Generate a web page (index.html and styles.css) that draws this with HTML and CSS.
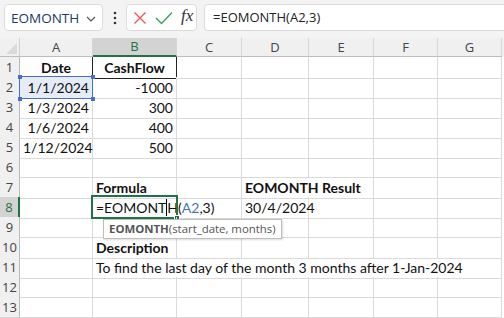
FILE: index.html
```html
<!DOCTYPE html>
<html lang="en">
<head>
  <meta charset="UTF-8">
  <title>EOMONTH</title>
  <link rel="stylesheet" href="styles.css">
</head>
<body>
  <div class="toolbar">
    <div class="namebox">
      <span>EOMONTH</span>
      <svg class="chev" width="10" height="6" viewBox="0 0 10 6"><path d="M1 1 L5 5 L9 1" fill="none" stroke="#555" stroke-width="1.2"/></svg>
    </div>
    <svg class="dots" width="4" height="14" viewBox="0 0 4 14"><circle cx="2" cy="2" r="1.3" fill="#333"/><circle cx="2" cy="7" r="1.3" fill="#333"/><circle cx="2" cy="12" r="1.3" fill="#333"/></svg>
    <div class="fxbox">
      <svg width="14" height="14" viewBox="0 0 14 14"><path d="M1.5 1.5 L12.5 12.5 M12.5 1.5 L1.5 12.5" stroke="#e8585a" stroke-width="1.4" fill="none"/></svg>
      <svg width="18" height="14" viewBox="0 0 18 14"><path d="M1 7 L6.5 12.5 L17 1.5" stroke="#3d9f5f" stroke-width="1.4" fill="none"/></svg>
      <span class="fx">fx</span>
    </div>
    <div class="formula">=EOMONTH(A2,3)</div>
  </div>

  <div class="sheet">
    <div class="row head">
      <div class="corner"></div>
      <div class="col">A</div>
      <div class="col sel">B</div>
      <div class="col">C</div>
      <div class="col">D</div>
      <div class="col">E</div>
      <div class="col">F</div>
      <div class="col">G</div>
    </div>
    <div class="row">
      <div class="num">1</div>
      <div class="cell b center">Date</div>
      <div class="cell b center boxed">CashFlow</div>
      <div class="cell"></div><div class="cell"></div><div class="cell"></div><div class="cell"></div><div class="cell"></div>
    </div>
    <div class="row">
      <div class="num">2</div>
      <div class="cell right ref">1/1/2024<i class="h tl"></i><i class="h tr"></i><i class="h bl"></i><i class="h br"></i></div>
      <div class="cell right">-1000</div>
      <div class="cell"></div><div class="cell"></div><div class="cell"></div><div class="cell"></div><div class="cell"></div>
    </div>
    <div class="row">
      <div class="num">3</div>
      <div class="cell right">1/3/2024</div>
      <div class="cell right">300</div>
      <div class="cell"></div><div class="cell"></div><div class="cell"></div><div class="cell"></div><div class="cell"></div>
    </div>
    <div class="row">
      <div class="num">4</div>
      <div class="cell right">1/6/2024</div>
      <div class="cell right">400</div>
      <div class="cell"></div><div class="cell"></div><div class="cell"></div><div class="cell"></div><div class="cell"></div>
    </div>
    <div class="row">
      <div class="num">5</div>
      <div class="cell right">1/12/2024</div>
      <div class="cell right">500</div>
      <div class="cell"></div><div class="cell"></div><div class="cell"></div><div class="cell"></div><div class="cell"></div>
    </div>
    <div class="row">
      <div class="num">6</div>
      <div class="cell"></div><div class="cell"></div><div class="cell"></div><div class="cell"></div><div class="cell"></div><div class="cell"></div><div class="cell"></div>
    </div>
    <div class="row">
      <div class="num">7</div>
      <div class="cell"></div>
      <div class="cell b">Formula</div>
      <div class="cell"></div>
      <div class="cell b span2">EOMONTH Result</div>
      <div class="cell"></div><div class="cell"></div>
    </div>
    <div class="row">
      <div class="num active">8</div>
      <div class="cell"></div>
      <div class="cell editing">=EOMONT<span class="caret"></span>H(<span class="refname">A2</span>,3)<i class="fill"></i></div>
      <div class="cell"></div>
      <div class="cell">30/4/2024</div>
      <div class="cell"></div><div class="cell"></div><div class="cell"></div>
    </div>
    <div class="row">
      <div class="num">9</div>
      <div class="cell"></div>
      <div class="cell tipcell"><div class="tip"><b>EOMONTH</b>(start_date, months)</div></div>
      <div class="cell"></div><div class="cell"></div><div class="cell"></div><div class="cell"></div><div class="cell"></div>
    </div>
    <div class="row">
      <div class="num">10</div>
      <div class="cell"></div>
      <div class="cell b">Description</div>
      <div class="cell"></div><div class="cell"></div><div class="cell"></div><div class="cell"></div><div class="cell"></div>
    </div>
    <div class="row">
      <div class="num">11</div>
      <div class="cell"></div>
      <div class="cell span6">To find the last day of the month 3 months after 1-Jan-2024</div>
    </div>
    <div class="row">
      <div class="num">12</div>
      <div class="cell"></div><div class="cell"></div><div class="cell"></div><div class="cell"></div><div class="cell"></div><div class="cell"></div><div class="cell"></div>
    </div>
    <div class="row">
      <div class="num">13</div>
      <div class="cell"></div><div class="cell"></div><div class="cell"></div><div class="cell"></div><div class="cell"></div><div class="cell"></div><div class="cell"></div>
    </div>
  </div>
</body>
</html>
```

FILE: styles.css
```css
body {
  margin: 0;
  width: 504px;
  height: 318px;
  overflow: hidden;
  background: #fff;
  font-family: "Open Sans", "Noto Sans", sans-serif;
}
.toolbar {
  height: 38px;
  background: #f3f3f3;
  display: flex;
  align-items: flex-start;
  padding-top: 4px;
  box-sizing: border-box;
}
.namebox {
  margin-left: 4px;
  width: 99px;
  height: 27px;
  box-sizing: border-box;
  background: #fff;
  border: 1px solid #dcdcdc;
  border-radius: 4px;
  display: flex;
  align-items: center;
  justify-content: space-between;
  padding: 0 6px 0 6px;
  font-size: 13.5px;
  color: #203864;
}
.chev {
  margin-top: 2px;
}
.dots {
  margin: 7px 9px 0 10px;
}
.fxbox {
  width: 71px;
  height: 27px;
  box-sizing: border-box;
  background: #fff;
  border: 1px solid #dcdcdc;
  border-radius: 4px;
  display: flex;
  align-items: center;
  gap: 8px;
  padding-left: 6px;
}
.fx {
  font-family: "Liberation Serif", "DejaVu Serif", serif;
  font-style: italic;
  font-size: 17px;
  color: #333;
  margin-top: -3px;
}
.formula {
  margin-left: 7px;
  flex: 1;
  height: 27px;
  box-sizing: border-box;
  background: #fff;
  border: 1px solid #dcdcdc;
  border-right: none;
  border-radius: 4px 0 0 4px;
  padding-left: 8px;
  line-height: 25px;
  font-size: 13px;
  color: #222;
}
.row {
  display: grid;
  grid-template-columns: 20px 73px 84px 65px 67px 65px 64px 64px;
  height: 20px;
}
.row.head {
  height: 19px;
  background: #f0f0f0;
}
.corner {
  position: relative;
  border-right: 1px solid #d0d0d0;
  border-bottom: 1px solid #bcbcbc;
}
.corner::after {
  content: "";
  position: absolute;
  right: 2px;
  bottom: 2px;
  border-left: 11px solid transparent;
  border-bottom: 11px solid #dadada;
}
.col {
  border-right: 1px solid #d6d6d6;
  border-bottom: 1px solid #bcbcbc;
  text-align: center;
  font-size: 13px;
  line-height: 18px;
  color: #444;
}
.col.sel {
  background: #d3d3d3;
  color: #217346;
  border-bottom: 2px solid #217346;
  line-height: 17px;
}
.num {
  background: #f0f0f0;
  border-right: 1px solid #bcbcbc;
  border-bottom: 1px solid #d6d6d6;
  text-align: center;
  font-size: 13px;
  line-height: 20px;
  color: #444;
}
.num.active {
  background: #d3d3d3;
  color: #217346;
  border-right: 2px solid #217346;
}
.cell {
  border-right: 1px solid #dadada;
  border-bottom: 1px solid #dadada;
  font-family: Lato, "Liberation Sans", sans-serif;
  font-size: 14px;
  line-height: 21px;
  color: #111;
  padding: 0 3px;
  white-space: nowrap;
  overflow: visible;
  position: relative;
}
.b {
  font-weight: bold;
}
.center {
  text-align: center;
}
.right {
  text-align: right;
}
.span2 {
  grid-column: span 2;
}
.span6 {
  grid-column: span 6;
}
.boxed {
  border: 1px solid #222;
  border-top: none;
  margin-left: -1px;
}
.ref {
  background: #e6ecf7;
}
.ref::after {
  content: "";
  position: absolute;
  left: -1px;
  top: -1px;
  right: -1px;
  bottom: -1px;
  border: 1.5px solid #4472c4;
}
.h {
  position: absolute;
  width: 4px;
  height: 4px;
  background: #4472c4;
  z-index: 2;
}
.h.tl { left: -2px; top: -2px; }
.h.tr { right: -3px; top: -2px; }
.h.bl { left: -2px; bottom: -3px; }
.h.br { right: -3px; bottom: -3px; }
.editing {
  z-index: 3;
}
.editing::after {
  content: "";
  position: absolute;
  left: -2px;
  top: -2px;
  right: -2px;
  bottom: -1px;
  border: 2px solid #217346;
}
.fill {
  position: absolute;
  right: -4px;
  bottom: -3px;
  width: 4px;
  height: 4px;
  background: #217346;
  border: 1px solid #fff;
  z-index: 4;
}
.caret {
  display: inline-block;
  width: 1px;
  height: 17px;
  background: #000;
  vertical-align: -3px;
}
.refname {
  color: #4472c4;
}
.tipcell {
  z-index: 3;
}
.tip {
  position: absolute;
  left: 10px;
  top: 2px;
  height: 18px;
  padding: 0 5px;
  background: #fff;
  border: 1px solid #bdbdbd;
  box-shadow: 1px 1px 2px rgba(0,0,0,0.15);
  font-family: "Open Sans", "Noto Sans", sans-serif;
  font-size: 11.4px;
  line-height: 17px;
  color: #555;
}
.tip b {
  color: #555;
}
```
